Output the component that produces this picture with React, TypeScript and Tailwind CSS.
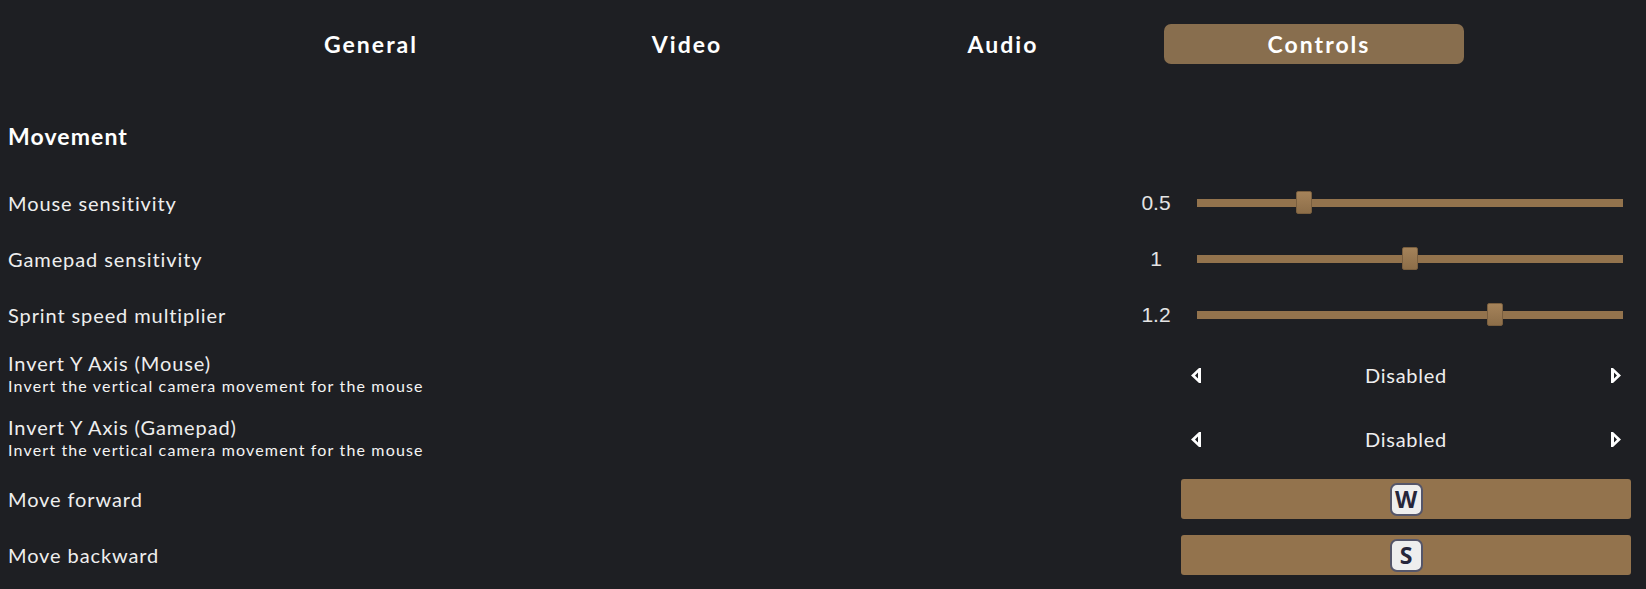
const tabs = ["General", "Video", "Audio", "Controls"];

const sliders = [
  { label: "Mouse sensitivity", value: "0.5", percent: 25 },
  { label: "Gamepad sensitivity", value: "1", percent: 50 },
  { label: "Sprint speed multiplier", value: "1.2", percent: 70 },
];

const toggles = ["Invert Y Axis (Mouse)", "Invert Y Axis (Gamepad)"];

const keybinds = [
  { label: "Move forward", key: "W" },
  { label: "Move backward", key: "S" },
];

function Arrow({ right }: { right?: boolean }) {
  return (
    <svg width="10" height="15" viewBox="0 0 10 15" className={right ? "" : "rotate-180"}>
      <path d="M0 0 L2 0 L10 7.5 L2 15 L0 15 Z M3 4.5 L3 10.5 L6 7.5 Z" fill="#fff" fillRule="evenodd" />
    </svg>
  );
}

function Slider({ value, percent }: { value: string; percent: number }) {
  return (
    <div className="flex items-center justify-end pr-2">
      <span className="w-[82px] text-center text-[21px] text-[#e4e4e4] font-['Liberation_Sans',sans-serif]">
        {value}
      </span>
      <div className="relative h-2 w-[426px] bg-[#93734d]">
        <div
          className="absolute top-[-8px] h-[23px] w-4 -translate-x-1/2 rounded-[2px] border border-[#7a5f3f] bg-gradient-to-b from-[#a5835a] to-[#8d6e49]"
          style={{ left: `${percent}%` }}
        />
      </div>
    </div>
  );
}

function Toggle() {
  return (
    <div className="flex w-[450px] items-center justify-between px-[10px]">
      <Arrow />
      <span className="text-[20px] tracking-[0.75px] text-[#eeeeee]">Disabled</span>
      <Arrow right />
    </div>
  );
}

function KeyButton({ name }: { name: string }) {
  return (
    <div className="flex h-10 w-[450px] items-center justify-center rounded-[3px] bg-[#93734d]">
      <span className="flex h-[33px] w-[33px] items-center justify-center rounded-[7px] border-2 border-[#55566a] bg-[#eeeeee] text-[23px] font-bold text-[#26263a] font-['Open_Sans',sans-serif]">
        {name}
      </span>
    </div>
  );
}

export default function App() {
  return (
    <main className="h-[589px] overflow-hidden bg-[#1e1f23] text-white font-['Lato',sans-serif]">
      <nav className="flex gap-4 pl-[216px] pt-6">
        {tabs.map((t) => (
          <div
            key={t}
            className={`flex h-10 w-[300px] items-center justify-center rounded-[7px] pl-[10px] pt-[1px] text-[23px] font-bold tracking-[2px] ${
              t === "Controls" ? "bg-[#886e4e]" : ""
            }`}
          >
            {t}
          </div>
        ))}
      </nav>

      <h2 className="mt-[57px] h-[62px] pl-2 text-[23px] font-bold leading-[30px] tracking-[1.1px]">Movement</h2>

      <div className="flex flex-col gap-4 pl-2 pr-[15px]">
        {sliders.map((s) => (
          <div key={s.label} className="flex h-10 items-center justify-between">
            <span className="text-[20px] tracking-[0.9px] text-[#eeeeee]">{s.label}</span>
            <Slider value={s.value} percent={s.percent} />
          </div>
        ))}
        {toggles.map((t) => (
          <div key={t} className="flex h-12 items-center justify-between">
            <div className="pb-[5px]">
              <div className="text-[20px] leading-[25px] tracking-[0.9px] text-[#eeeeee]">{t}</div>
              <div className="text-[16px] leading-[19px] tracking-[1.16px] text-[#f4f4f4]">
                Invert the vertical camera movement for the mouse
              </div>
            </div>
            <Toggle />
          </div>
        ))}
        {keybinds.map((k) => (
          <div key={k.label} className="flex h-10 items-center justify-between">
            <span className="text-[20px] tracking-[0.9px] text-[#eeeeee]">{k.label}</span>
            <KeyButton name={k.key} />
          </div>
        ))}
      </div>
    </main>
  );
}
